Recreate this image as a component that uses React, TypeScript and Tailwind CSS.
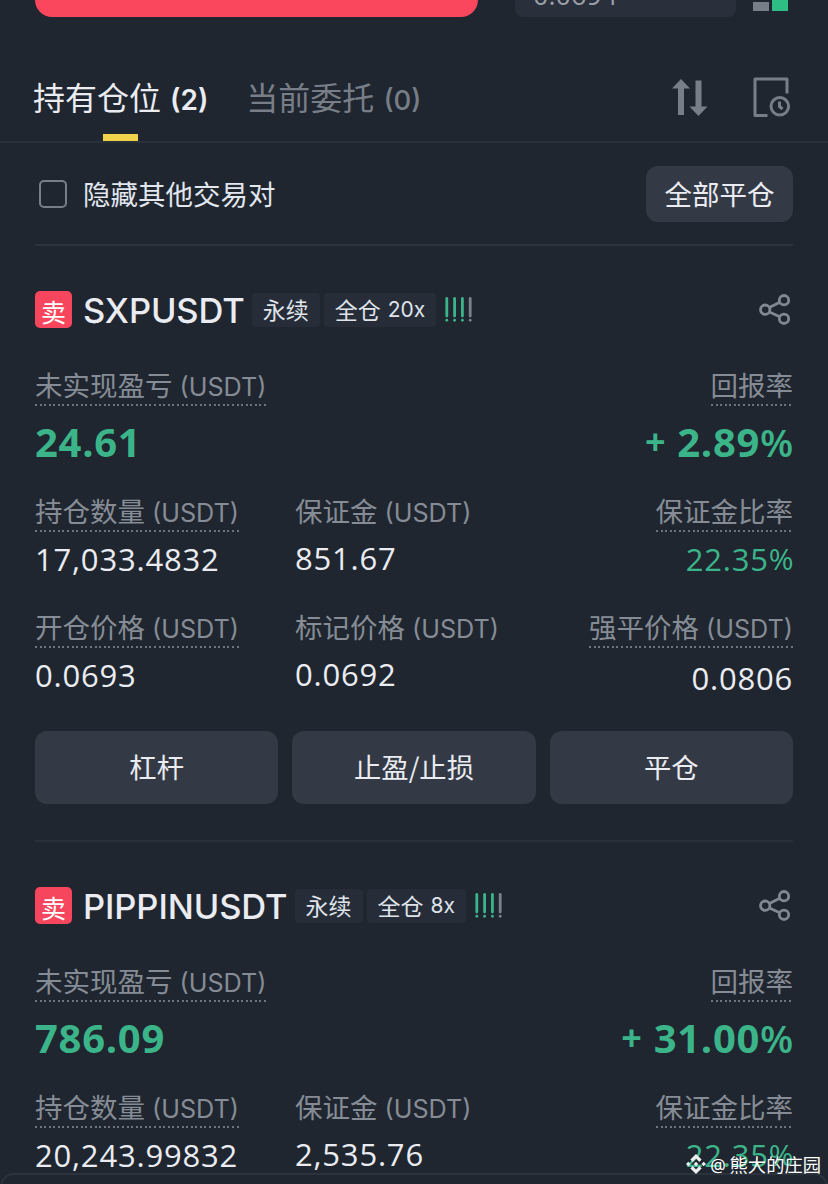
import type { ReactNode } from "react";

interface Metric {
  label: string;
  unit?: boolean;
  dotted?: boolean;
  value: string;
  percent?: boolean;
  valueClass?: string;
}

interface Position {
  symbol: string;
  leverage: string;
  pnl: string;
  roe: string;
  rows: Metric[][];
}

const positions: Position[] = [
  {
    symbol: "SXPUSDT",
    leverage: "20x",
    pnl: "24.61",
    roe: "2.89",
    rows: [
      [
        { label: "持仓数量", unit: true, dotted: true, value: "17,033.4832" },
        { label: "保证金", unit: true, value: "851.67", valueClass: "-mt-px" },
        { label: "保证金比率", dotted: true, value: "22.35", percent: true },
      ],
      [
        { label: "开仓价格", unit: true, dotted: true, value: "0.0693" },
        { label: "标记价格", unit: true, value: "0.0692", valueClass: "-mt-px" },
        { label: "强平价格", unit: true, dotted: true, value: "0.0806", valueClass: "mt-[3px]" },
      ],
    ],
  },
  {
    symbol: "PIPPINUSDT",
    leverage: "8x",
    pnl: "786.09",
    roe: "31.00",
    rows: [
      [
        { label: "持仓数量", unit: true, dotted: true, value: "20,243.99832" },
        { label: "保证金", unit: true, value: "2,535.76", valueClass: "-mt-px" },
        { label: "保证金比率", dotted: true, value: "22.35", percent: true },
      ],
    ],
  },
];

function Label({ text, unit, dotted }: { text: string; unit?: boolean; dotted?: boolean }) {
  return (
    <div className="flex h-[38px] w-fit flex-col justify-between">
      <div className="flex h-8 items-baseline whitespace-pre text-[27.5px] leading-8 text-[#868c95]">
        {text}
        {unit && <span className="ml-[7px] font-[Inter] text-[25.2px]">(USDT)</span>}
      </div>
      {dotted && (
        <div className="h-[2px] bg-[repeating-linear-gradient(90deg,#6f757f_0_2px,transparent_2px_4.58px)]" />
      )}
    </div>
  );
}

function MetricCell({ metric, right }: { metric: Metric; right: boolean }) {
  return (
    <div className={right ? "flex flex-col items-end" : "flex flex-col items-start"}>
      <Label text={metric.label} unit={metric.unit} dotted={metric.dotted} />
      <div className={metric.valueClass}>
        <div
          className={`mt-[7px] mb-px flex font-['Open_Sans'] text-[31px] leading-10 tracking-[0.8px] ${
            metric.percent ? "text-[#3cb48a]" : "text-[#eaecf2]"
          }`}
        >
          {metric.value}
          {metric.percent && <span className="text-[30px] tracking-[-0.5px]">%</span>}
        </div>
      </div>
    </div>
  );
}

function Tag({ children }: { children: ReactNode }) {
  return (
    <span className="flex h-[34px] items-center rounded bg-[#272d38] px-[11px] text-[23px] text-[#dfe3ea]">
      {children}
    </span>
  );
}

function RiskBars() {
  return (
    <svg className="ml-[9px] h-[25px] w-7" viewBox="0 0 28 25" fill="none">
      {[1.8, 9.6, 17.4, 25.2].map((x, i) => (
        <g key={x} stroke={i < 3 ? "#3cb48a" : "#7c828c"} strokeWidth="2.8" strokeLinecap="round">
          <path d={`M${x} 1.500v17.500`} />
          <path d={`M${x} 23.200v.1`} />
        </g>
      ))}
    </svg>
  );
}

function ShareIcon() {
  return (
    <svg className="mr-0.5 ml-auto h-8 w-8" viewBox="0 0 32 32" fill="none" stroke="#828891" strokeWidth="2.8">
      <circle cx="6.2" cy="15.7" r="4.7" />
      <circle cx="25" cy="6.2" r="4.7" />
      <circle cx="25" cy="24.800" r="4.7" />
      <path d="M10.400 13.500l10.400-5.200M10.400 17.900l10.400 4.800" />
    </svg>
  );
}

function SortIcon() {
  return (
    <svg className="h-[37px] w-9" viewBox="0 0 36 37" fill="#777e88">
      <path d="M9 0l9 9.500h-6V36H6V9.500H0zM23.500 1.500h6V27.500h6L26.500 37l-9-9.500h6z" />
    </svg>
  );
}

function HistoryIcon() {
  return (
    <svg className="ml-[45px] h-10 w-[38px]" viewBox="0 0 38 40" fill="none" stroke="#777e88" strokeWidth="3">
      <path d="M14.500 38.500H2V2h32v14.500" strokeLinejoin="round" />
      <circle cx="26.800" cy="29.300" r="8.800" />
      <path d="M26.500 24.500v5l3 2.500" />
    </svg>
  );
}

function PositionCard({ position }: { position: Position }) {
  return (
    <section className="h-[596px] shrink-0 border-b-2 border-[#282f38] pt-[45px]">
      <div className="flex h-[37px] items-center">
        <span className="flex h-[37px] w-[37px] items-end justify-center rounded-[5px] bg-[#f6465d] text-[25px] leading-[34px] text-white">
          卖
        </span>
        <h2 className="mr-[7px] ml-[11px] pt-0.5 font-[Inter] text-[34.5px] font-medium tracking-[-0.1px] text-[#eaecf2]">
          {position.symbol}
        </h2>
        <div className="flex gap-1">
          <Tag>永续</Tag>
          <Tag>
            全仓<span className="ml-[7px] pt-px font-[Inter] text-[21px]">{position.leverage}</span>
          </Tag>
        </div>
        <RiskBars />
        <ShareIcon />
      </div>

      <div className="mt-10 flex justify-between">
        <Label text="未实现盈亏" unit dotted />
        <Label text="回报率" dotted />
      </div>
      <div className="mt-3 flex justify-between font-['Open_Sans'] text-[40px] leading-[48px] font-bold tracking-[0.7px] text-[#3cb48a]">
        <span>{position.pnl}</span>
        <span className="flex">
          <span className="mr-[11px] text-[36px]">+</span>
          {position.roe}
          <span className="text-[38.5px] font-semibold tracking-[-0.3px]">%</span>
        </span>
      </div>

      {position.rows.map((row, idx) => (
        <div
          key={idx}
          className={`grid grid-cols-[260px_1fr_auto] ${idx === 0 ? "mt-7" : "mt-[30px]"}`}
        >
          {row.map((metric, i) => (
            <MetricCell key={metric.label} metric={metric} right={i === 2} />
          ))}
        </div>
      ))}

      {/* Actions, the second card ends under the bottom sheet */}
      {position.rows.length > 1 && (
        <div className="mt-8 grid grid-cols-3 gap-3.5">
          {["杠杆", "止盈/止损", "平仓"].map((action) => (
            <button
              key={action}
              className="h-[73px] rounded-xl bg-[#343a45] pb-0.5 text-[27.3px] text-[#eaecf2]"
            >
              {action}
            </button>
          ))}
        </div>
      )}
    </section>
  );
}

export default function App() {
  return (
    <div className="relative flex h-[1184px] w-[828px] flex-col overflow-hidden bg-[#1f262f] font-['Noto_Sans_CJK_SC',sans-serif]">
      {/* Bottom edge of the order form */}
      <div className="flex h-[17px] shrink-0 items-end pl-[35px]">
        <div className="h-[17px] w-[443px] rounded-b-[17px] bg-[#fa475e]" />
        <div className="ml-[37px] flex h-[17px] w-[221px] items-end overflow-hidden rounded-b-lg bg-[#2a303b] pb-[8px] pl-[18px]">
          <span className="font-['Open_Sans'] text-[27px] leading-7 text-[#9a9fa8]">0.0694</span>
        </div>
        <div className="mb-[6px] ml-[17px] flex items-end gap-[3px]">
          <div className="h-[9px] w-4 bg-[#777e88]" />
          <div className="h-[11px] w-4 bg-[#2ebd85]" />
        </div>
      </div>

      {/* Tabs */}
      <div className="flex h-[126px] shrink-0 border-b-2 border-[#2a313a] pr-[37px] pl-[33px] text-[32px]">
        <div className="flex flex-col items-center">
          <div className="mt-[55px] flex h-12 items-baseline leading-[48px] text-[#eaecf2]">
            持有仓位<span className="ml-[9px] font-[Inter] text-[28px] font-semibold">(2)</span>
          </div>
          <div className="mt-[14px] h-[7px] w-[35px] bg-[#f0d34a]" />
        </div>
        <div className="mt-[55px] ml-[38px] flex h-12 items-baseline leading-[48px] text-[#787e88]">
          当前委托<span className="ml-[9px] font-[Inter] text-[27.5px] font-medium">(0)</span>
        </div>
        <div className="mt-[58px] ml-auto flex h-11 items-center">
          <SortIcon />
          <HistoryIcon />
        </div>
      </div>

      <main className="flex flex-col px-[35px]">
        <div className="flex h-[103px] shrink-0 items-center border-b-2 border-[#2c333c] pt-px">
          <span className="ml-1 h-7 w-7 rounded-[5px] border-2 border-[#787e87]" />
          <span className="ml-4 text-[27.5px] text-[#e2e6ee]">隐藏其他交易对</span>
          <button className="ml-auto h-14 w-[147px] rounded-xl bg-[#343a45] text-[27.5px] text-[#eaecf2]">
            全部平仓
          </button>
        </div>
        {positions.map((position) => (
          <PositionCard key={position.symbol} position={position} />
        ))}
      </main>

      {/* Bottom sheet edge */}
      <div className="absolute inset-x-0 top-[1173px] h-10 rounded-t-[14px] border-2 border-[#2c333d] bg-[#1f262f]" />

      {/* Author mark */}
      <div className="absolute top-[1149px] right-[7px] flex items-center text-[18.3px] leading-[30px] text-white">
        <svg className="mr-1 h-5 w-5" viewBox="0 0 20 20" fill="#eceef0">
          <path d="M10 0l5.600 5.600-2.300 2.300L10 4.600 6.700 7.900 4.400 5.600zM10 7.700l2.300 2.300-2.300 2.300L7.700 10zM2.300 7.700L4.600 10l-2.300 2.300L0 10zM17.700 7.700L20 10l-2.300 2.300-2.300-2.300zM4.400 14.400l2.300-2.300 3.300 3.300 3.300-3.300 2.300 2.300L10 20z" />
        </svg>
        <span className="mr-1 font-[Inter] text-[16px]">@</span>熊大的庄园
      </div>
    </div>
  );
}
